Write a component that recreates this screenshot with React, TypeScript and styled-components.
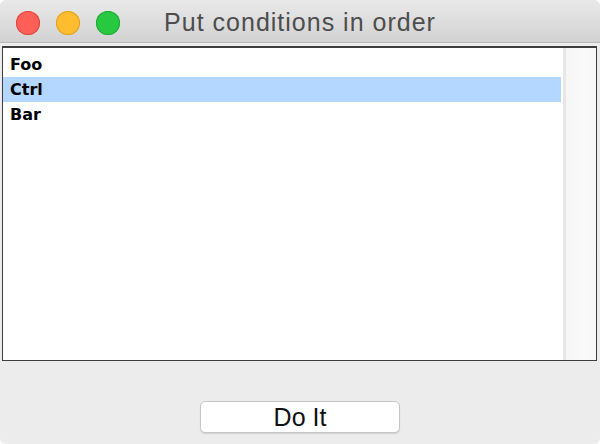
import React from "react";
import styled, { createGlobalStyle } from "styled-components";

const Global = createGlobalStyle`
  html, body { margin: 0; padding: 0; background: #ffffff; }
  body { width: 600px; height: 444px; overflow: hidden; }
  * { box-sizing: border-box; }
`;

const Window = styled.div`
  width: 600px;
  height: 444px;
  background: #ececec;
  border-radius: 6px;
  overflow: hidden;
  display: flex;
  flex-direction: column;
`;

const TitleBar = styled.div`
  height: 43px;
  padding-top: 3px;
  background: linear-gradient(#e9e9e9, #d2d2d2);
  border-bottom: 1px solid #b8b8b8;
  display: grid;
  grid-template-columns: 1fr auto 1fr;
  align-items: center;
`;

const Lights = styled.div`
  display: flex;
  gap: 16px;
  padding-left: 16px;
`;

const Light = styled.span<{ $fill: string; $edge: string }>`
  width: 24px;
  height: 24px;
  border-radius: 50%;
  background: ${(p) => p.$fill};
  box-shadow: inset 0 0 0 1px ${(p) => p.$edge};
`;

const Title = styled.div`
  font-family: "Liberation Sans", Arial, sans-serif;
  font-size: 25px;
  letter-spacing: 1px;
  color: #4d4d4d;
  white-space: nowrap;
`;

const Body = styled.div`
  flex: 1;
  display: flex;
  flex-direction: column;
  padding: 3px 3px 0 2px;
`;

const ListBox = styled.div`
  height: 315px;
  background: #ffffff;
  border: 1px solid #3d3d3d;
  border-top-width: 2px;
  display: flex;
`;

const Rows = styled.div`
  flex: 1;
  padding: 4px 2px 0 0;
  display: flex;
  flex-direction: column;
`;

const Row = styled.div<{ $selected?: boolean }>`
  height: 25px;
  line-height: 25px;
  padding-left: 7px;
  font-family: "DejaVu Sans", Verdana, sans-serif;
  font-weight: bold;
  font-size: 16px;
  color: #000000;
  background: ${(p) => (p.$selected ? "#b3d7ff" : "transparent")};
`;

const ScrollTrack = styled.div`
  width: 33px;
  background: linear-gradient(to right, #f6f6f6, #fafafa 60%, #f7f7f7);
  border-left: 3px solid #e7e7e7;
`;

const Footer = styled.div`
  display: flex;
  justify-content: center;
  padding-top: 40px;
  padding-left: 1px;
`;

const Button = styled.button`
  width: 200px;
  height: 32px;
  background: #ffffff;
  border: 1px solid #c6c6c6;
  border-radius: 5px;
  box-shadow: 0 1px 1px rgba(0, 0, 0, 0.12);
  font-family: "Liberation Sans", Arial, sans-serif;
  font-size: 25px;
  color: #111111;
  padding: 0;
  line-height: 30px;
`;

const items = ["Foo", "Ctrl", "Bar"];

export default function App() {
  return (
    <>
      <Global />
      <Window>
        <TitleBar>
          <Lights>
            <Light $fill="#fe5f57" $edge="#e2463f" />
            <Light $fill="#febc2e" $edge="#e0a11b" />
            <Light $fill="#28c840" $edge="#1eaa33" />
          </Lights>
          <Title>Put conditions in order</Title>
          <div />
        </TitleBar>
        <Body>
          <ListBox>
            <Rows>
              {items.map((it) => (
                <Row key={it} $selected={it === "Ctrl"}>
                  {it}
                </Row>
              ))}
            </Rows>
            <ScrollTrack />
          </ListBox>
          <Footer>
            <Button>Do It</Button>
          </Footer>
        </Body>
      </Window>
    </>
  );
}
